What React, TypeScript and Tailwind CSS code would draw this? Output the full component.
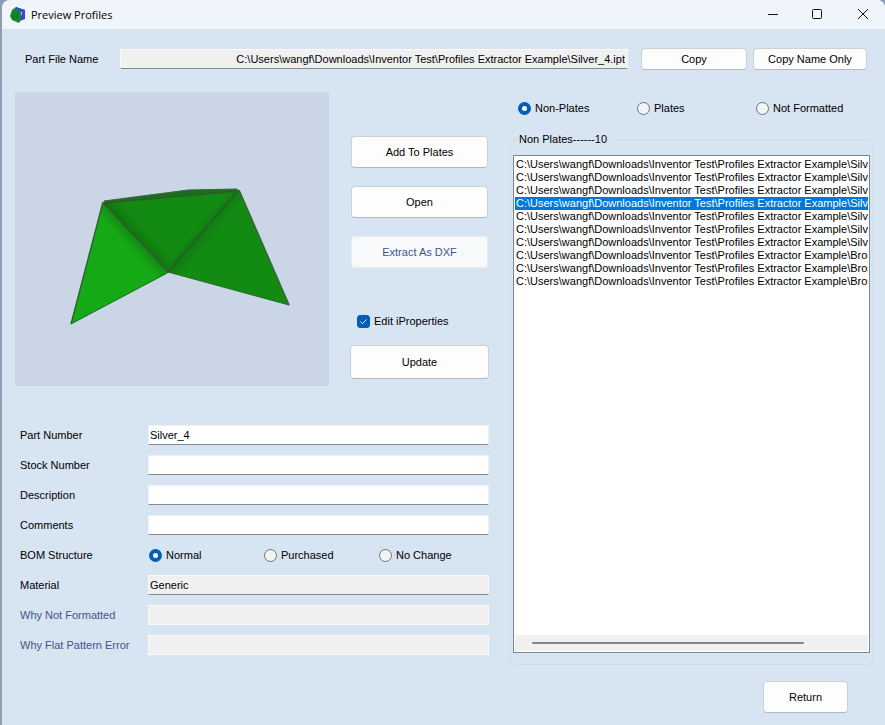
import { useState } from "react";
import type { ReactNode } from "react";
import clsx from "clsx";

const folder = "C:\\Users\\wangf\\Downloads\\Inventor Test\\Profiles Extractor Example\\";

const profiles = [
  "Silv",
  "Silv",
  "Silv",
  "Silv",
  "Silv",
  "Silv",
  "Silv",
  "Bron",
  "Bron",
  "Bron",
];

const fields = [
  { id: "part-number", label: "Part Number", value: "Silver_4" },
  { id: "stock-number", label: "Stock Number", value: "" },
  { id: "description", label: "Description", value: "" },
  { id: "comments", label: "Comments", value: "" },
];

const AppLogo = () => (
  <svg viewBox="0 0 16 16" className="size-4" aria-hidden="true">
    <path d="M6 0 L11 2 L11 13 L9 16 L2 13 L0 9 L2 3 Z" fill="#168a24" />
    <path d="M6 0 L15 3 L12 5 L5 3 Z" fill="#2f5fa8" />
    <path d="M8 1 L15 3 L15 12 L10 14 L12 5 Z" fill="#3a44dc" />
    <path d="M4 6 L5 6 M4 8 L4 12 M9 5 L7 8 L7 12" stroke="#0b6035" fill="none" />
  </svg>
);

const Button = ({
  children,
  className,
  disabled,
}: {
  children: ReactNode;
  className?: string;
  disabled?: boolean;
}) => (
  <button
    type="button"
    disabled={disabled}
    className={clsx(
      "rounded border",
      disabled
        ? "border-[#e9edf2] bg-[#f8f9fa] text-[#3f5687]"
        : "border-[#ccd1d6] border-b-[#b4b9be] bg-[#fdfdfd]",
      className,
    )}
  >
    {children}
  </button>
);

const Radio = ({
  name,
  label,
  checked,
  onChange,
}: {
  name: string;
  label: string;
  checked: boolean;
  onChange: () => void;
}) => (
  <label className="flex items-center gap-1">
    <input
      type="radio"
      name={name}
      checked={checked}
      onChange={onChange}
      className="size-[13px] shrink-0 appearance-none rounded-full border border-[#6f7275] bg-[#f3f4f5] checked:border-4 checked:border-[#005fb8] checked:bg-white"
    />
    {label}
  </label>
);

const PartPreview = () => (
  <svg viewBox="0 0 314 294" className="block w-full bg-[#cad5e5]" role="img" aria-label="Part preview">
    <defs>
      <linearGradient id="left-face" gradientUnits="userSpaceOnUse" x1="121" y1="145" x2="111" y2="154">
        <stop offset="0" stopColor="#128a13" />
        <stop offset="1" stopColor="#16a916" />
      </linearGradient>
      <linearGradient id="mid-left" gradientUnits="userSpaceOnUse" x1="121" y1="145" x2="131" y2="136">
        <stop offset="0" stopColor="#0f760f" />
        <stop offset="1" stopColor="#138b13" />
      </linearGradient>
      <linearGradient id="mid-right" gradientUnits="userSpaceOnUse" x1="188" y1="139" x2="180" y2="132">
        <stop offset="0" stopColor="#107a11" />
        <stop offset="1" stopColor="#138b13" stopOpacity="0" />
      </linearGradient>
      <linearGradient id="right-face" gradientUnits="userSpaceOnUse" x1="188" y1="139" x2="198" y2="147">
        <stop offset="0" stopColor="#107c11" />
        <stop offset="1" stopColor="#138b13" />
      </linearGradient>
    </defs>
    <path d="M89 109 L173 98 L222 97 L224 100 L90 111 Z" fill="#1b6f1c" stroke="#3a633b" />
    <path d="M88 110 L56 232 L153 181 Z" fill="url(#left-face)" />
    <path d="M88 111 L223 99 L153 180 Z" fill="url(#mid-left)" />
    <path d="M88 111 L223 99 L153 180 Z" fill="url(#mid-right)" />
    <path d="M224 98 L274 213 L153 180 Z" fill="url(#right-face)" />
    <path d="M88 110 L56 232" stroke="#2d602d" strokeWidth="1.4" />
    <path d="M56 232 L152 181 M153 180 L274 213" stroke="#276b27" />
    <path d="M224 98 L274 213" stroke="#3a633b" strokeWidth="1.6" />
    <path d="M89 111 L153 180 L223 99" fill="none" stroke="#2a5c2b" strokeWidth="1.6" />
    <path d="M89 111 L223 99" stroke="#2a5c2b" strokeWidth="1.4" />
  </svg>
);

const TitleBar = () => (
  <header className="flex h-[29px] items-center bg-[#f0f4fb] pl-2">
    <AppLogo />
    <h1 className="ml-1 flex-1 pl-px font-['Open_Sans',sans-serif] text-[11px]">Preview Profiles</h1>
    <div className="flex items-center">
      <button type="button" aria-label="Minimize" className="flex w-[45px] justify-center">
        <svg viewBox="0 0 12 12" className="size-3" fill="none" stroke="#111">
          <path d="M1 5.5 H11" />
        </svg>
      </button>
      <button type="button" aria-label="Maximize" className="flex w-[45px] justify-center">
        <svg viewBox="0 0 12 12" className="size-3" fill="none" stroke="#111">
          <rect x="0.5" y="0.5" width="9" height="9" rx="1" />
        </svg>
      </button>
      <button type="button" aria-label="Close" className="flex w-[45px] justify-center">
        <svg viewBox="0 0 12 12" className="size-3" fill="none" stroke="#111">
          <path d="M1 0 L11 10 M11 0 L1 10" />
        </svg>
      </button>
    </div>
  </header>
);

const inputClass = "h-5 w-full border border-[#eef2f6] border-b-[#868a8e] bg-white px-px outline-none";
const readOnlyClass = "h-5 w-full border border-[#fafafa] border-b-[#868a8e] bg-[#f0f0f0] px-px outline-none";
const disabledClass = "h-5 w-full border border-[#fafafa] bg-[#f0f0f0] px-px";

const PropertiesForm = () => {
  const [bom, setBom] = useState("Normal");
  return (
    <form className="mt-[39px] grid grid-cols-[128px_1fr] items-center gap-y-2.5 pl-[5px]">
      {fields.map((field) => (
        <div key={field.id} className="contents">
          <label htmlFor={field.id}>{field.label}</label>
          <input id={field.id} defaultValue={field.value} className={inputClass} />
        </div>
      ))}
      <span id="bom-label">BOM Structure</span>
      <div
        role="radiogroup"
        aria-labelledby="bom-label"
        className="grid h-5 grid-cols-[115fr_115fr_110fr] items-center pl-px"
      >
        {["Normal", "Purchased", "No Change"].map((item) => (
          <Radio key={item} name="bom" label={item} checked={bom === item} onChange={() => setBom(item)} />
        ))}
      </div>
      <label htmlFor="material">Material</label>
      <input id="material" readOnly value="Generic" className={readOnlyClass} />
      <label htmlFor="why-not" className="text-[#3f5687]">
        Why Not Formatted
      </label>
      <input id="why-not" disabled className={disabledClass} />
      <label htmlFor="why-flat" className="text-[#3f5687]">
        Why Flat Pattern Error
      </label>
      <input id="why-flat" disabled className={disabledClass} />
    </form>
  );
};

const ProfileList = () => {
  const [selected, setSelected] = useState(3);
  return (
    <fieldset className="mt-[15px] flex min-w-0 flex-1 flex-col rounded-sm border border-[#d3dde6] px-0.5 pb-[11px]">
      <legend className="ml-1 px-0.5 leading-4">Non Plates------10</legend>
      <div className="mt-2 flex flex-1 flex-col border border-[#7a8794] bg-white p-px">
        <ul role="listbox" aria-label="Non Plates" className="flex-1 pt-px">
          {profiles.map((name, index) => (
            <li
              key={index}
              role="option"
              aria-selected={selected === index}
              onClick={() => setSelected(index)}
              className={clsx(
                "h-[13px] overflow-hidden whitespace-nowrap pl-px leading-[13px]",
                selected === index && "bg-[#0078d7] text-white",
              )}
            >
              {folder + name}
            </li>
          ))}
        </ul>
        <div className="flex h-4 items-center bg-[#f0f0f0] pr-16 pl-[17px]">
          <div className="h-0.5 flex-1 rounded-full bg-[#858585]" />
        </div>
      </div>
    </fieldset>
  );
};

const App = () => {
  const [filter, setFilter] = useState("Non-Plates");
  return (
    <div className="flex min-h-screen flex-col bg-[#8f9db3] pl-0.5 font-['Liberation_Sans',Arial,sans-serif] text-[11px] leading-4 text-black">
      <div className="flex flex-1 flex-col overflow-hidden rounded-t-lg bg-[#d7e4f1]">
        <TitleBar />
        <main className="flex flex-1 flex-col pt-[19px] pr-3 pb-3 pl-[13px]">
          <div className="flex items-center pr-1.5 pl-2.5">
            <label htmlFor="file-name" className="w-[95px] shrink-0">
              Part File Name
            </label>
            <input
              id="file-name"
              readOnly
              value={folder + "Silver_4.ipt"}
              className="h-5 min-w-0 flex-1 border border-[#fafafa] border-b-[#868a8e] bg-[#f0f0f0] px-0.5 text-right outline-none"
            />
            <Button className="ml-[13px] h-[22px] w-[106px]">Copy</Button>
            <Button className="ml-1.5 h-[22px] w-[114px]">Copy Name Only</Button>
          </div>

          <div className="mt-[22px] grid flex-1 grid-cols-[474fr_363fr] gap-x-[21px]">
            <section className="min-w-0">
              <div className="flex gap-[21px]">
                <div className="min-w-0 flex-1">
                  <PartPreview />
                </div>
                <div className="flex w-[139px] shrink-0 flex-col pt-11">
                  <div className="flex flex-col gap-[18px] px-px">
                    <Button className="h-8">Add To Plates</Button>
                    <Button className="h-8">Open</Button>
                    <Button className="h-8" disabled>
                      Extract As DXF
                    </Button>
                  </div>
                  <label className="mt-[45px] flex items-center gap-1 pl-[7px]">
                    <span className="grid">
                      <input
                        type="checkbox"
                        defaultChecked
                        className="peer col-start-1 row-start-1 size-[13px] appearance-none rounded-[3px] border border-[#6f7275] bg-white checked:border-[#005fb8] checked:bg-[#005fb8]"
                      />
                      <svg
                        viewBox="0 0 13 13"
                        className="pointer-events-none invisible col-start-1 row-start-1 size-[13px] peer-checked:visible"
                        fill="none"
                        stroke="#dcebf8"
                      >
                        <path d="M3.5 6.5 L5.5 8.7 L9.5 4.5" />
                      </svg>
                    </span>
                    Edit iProperties
                  </label>
                  <Button className="mt-4 h-[34px]">Update</Button>
                </div>
              </div>
              <PropertiesForm />
            </section>

            <section className="flex min-w-0 flex-col pt-2">
              <div className="grid grid-cols-[119fr_119fr_117fr] pl-2" role="radiogroup" aria-label="Filter">
                {["Non-Plates", "Plates", "Not Formatted"].map((item) => (
                  <Radio key={item} name="filter" label={item} checked={filter === item} onChange={() => setFilter(item)} />
                ))}
              </div>
              <ProfileList />
            </section>
          </div>

          <div className="mt-4 flex justify-end pr-[25px]">
            <Button className="h-8 w-[85px]">Return</Button>
          </div>
        </main>
      </div>
    </div>
  );
};

export default App;
